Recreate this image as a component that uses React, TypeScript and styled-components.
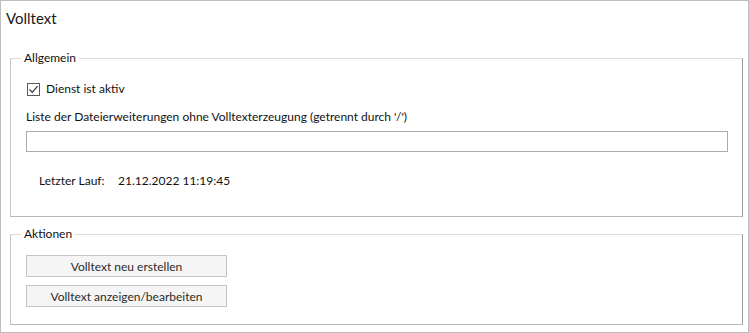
import React, { FC } from "react";
import styled, { createGlobalStyle } from "styled-components";

const GlobalStyle = createGlobalStyle`
  html, body {
    margin: 0;
    padding: 0;
    background: #ffffff;
  }
  body {
    font-family: Lato, "Noto Sans", sans-serif;
    font-size: 12px;
    color: #111111;
  }
`;

const Frame = styled.div`
  box-sizing: border-box;
  width: 749px;
  height: 333px;
  border: 1px solid #bdbdbd;
  padding: 7px 5px 0 5px;
  display: flex;
  flex-direction: column;
  background: #ffffff;
`;

const Title = styled.div`
  font-size: 15px;
  line-height: 20px;
  height: 20px;
  color: #1a1a1a;
`;

const Group = styled.fieldset<{ $top: number; $padTop: number; $padBottom: number }>`
  margin: ${(p) => p.$top}px 0 0 4px;
  padding: ${(p) => p.$padTop}px 14px ${(p) => p.$padBottom}px 15px;
  border-style: solid;
  border-width: 1px;
  border-color: #dcdcdc #9c9c9c #bababa #c6c6c6;
  display: flex;
  flex-direction: column;
  min-width: 0;
`;

const Legend = styled.legend`
  padding: 0 3px;
  margin-left: -5px;
  font-size: 12px;
  line-height: 16px;
  height: 16px;
`;

const CheckRow = styled.label`
  display: flex;
  align-items: center;
  gap: 6px;
  height: 16px;
  line-height: 16px;
`;

const CheckBox = styled.span`
  box-sizing: border-box;
  width: 13px;
  height: 13px;
  margin-left: 1px;
  border: 1px solid #5a5a5a;
  background: #ffffff;
  display: flex;
  align-items: center;
  justify-content: center;
`;

const FieldLabel = styled.div`
  margin-top: 12px;
  line-height: 16px;
  height: 16px;
`;

const TextInput = styled.input`
  box-sizing: border-box;
  margin-top: 6px;
  width: 100%;
  height: 21px;
  border: 1px solid #ababab;
  background: #ffffff;
  outline: none;
  padding: 0 3px;
  font: inherit;
`;

const InfoRow = styled.div`
  margin: 21px 0 0 13px;
  display: flex;
  line-height: 16px;
  height: 16px;
`;

const InfoKey = styled.span`
  width: 79px;
`;

const ActionButton = styled.button`
  box-sizing: border-box;
  width: 201px;
  height: 22px;
  margin: 0 0 8px 0;
  border: 1px solid #c5c5c5;
  background: #f5f5f5;
  color: #2b2b2b;
  font: inherit;
  padding: 0;
  &:last-child {
    margin-bottom: 0;
  }
`;

const Check: FC = () => (
  <svg width="11" height="11" viewBox="0 0 11 11">
    <path d="M1.5 5.5 L4.2 8.3 L9.6 2.2" fill="none" stroke="#333333" strokeWidth="1.2" />
  </svg>
);

const App: FC = () => {
  return (
    <>
      <GlobalStyle />
      <Frame>
        <Title>Volltext</Title>
        <Group $top={22} $padTop={15} $padBottom={27}>
          <Legend>Allgemein</Legend>
          <CheckRow>
            <CheckBox>
              <Check />
            </CheckBox>
            Dienst ist aktiv
          </CheckRow>
          <FieldLabel>Liste der Dateierweiterungen ohne Volltexterzeugung (getrennt durch '/')</FieldLabel>
          <TextInput defaultValue="" />
          <InfoRow>
            <InfoKey>Letzter Lauf:</InfoKey>
            <span>21.12.2022 11:19:45</span>
          </InfoRow>
        </Group>
        <Group $top={9} $padTop={13} $padBottom={17}>
          <Legend>Aktionen</Legend>
          <ActionButton>Volltext neu erstellen</ActionButton>
          <ActionButton>Volltext anzeigen/bearbeiten</ActionButton>
        </Group>
      </Frame>
    </>
  );
};

export default App;
